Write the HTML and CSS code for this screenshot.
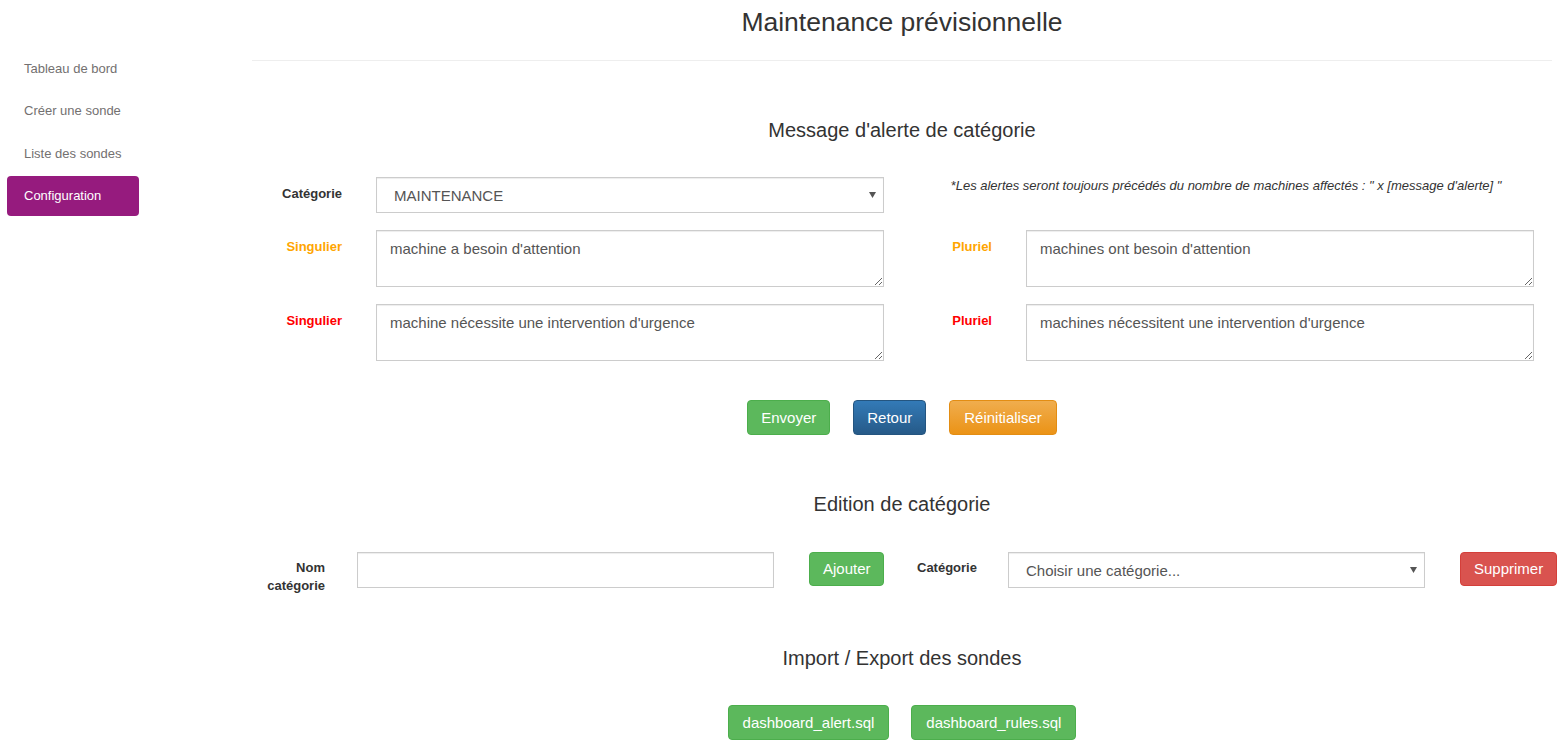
FILE: index.html
```html
<!DOCTYPE html>
<html lang="fr">
<head>
<meta charset="utf-8">
<title>Maintenance prévisionnelle</title>
<link rel="stylesheet" href="styles.css">
</head>
<body>
<div class="page">
  <aside class="sidebar">
    <nav class="nav">
      <a class="nav-item" href="#">Tableau de bord</a>
      <a class="nav-item" href="#">Créer une sonde</a>
      <a class="nav-item" href="#">Liste des sondes</a>
      <a class="nav-item active" href="#">Configuration</a>
    </nav>
  </aside>
  <main class="main">
    <h1 class="title">Maintenance prévisionnelle</h1>
    <hr class="sep">

    <h2 class="section-title first">Message d'alerte de catégorie</h2>
    <div class="alert-form">
      <label class="lbl">Catégorie</label>
      <select class="select">
        <option>MAINTENANCE</option>
      </select>
      <p class="note">*Les alertes seront toujours précédés du nombre de machines affectés : " x [message d'alerte] "</p>

      <label class="lbl orange">Singulier</label>
      <textarea class="textarea">machine a besoin d'attention</textarea>
      <label class="lbl orange">Pluriel</label>
      <textarea class="textarea">machines ont besoin d'attention</textarea>

      <label class="lbl red">Singulier</label>
      <textarea class="textarea">machine nécessite une intervention d'urgence</textarea>
      <label class="lbl red">Pluriel</label>
      <textarea class="textarea">machines nécessitent une intervention d'urgence</textarea>
    </div>
    <div class="actions">
      <button class="btn btn-success">Envoyer</button>
      <button class="btn btn-primary">Retour</button>
      <button class="btn btn-warning">Réinitialiser</button>
    </div>

    <h2 class="section-title">Edition de catégorie</h2>
    <div class="edit-row">
      <label class="lbl2 lbl-name">Nom catégorie</label>
      <input class="input" type="text">
      <button class="btn btn-sm btn-success btn-add">Ajouter</button>
      <label class="lbl2 lbl-cat">Catégorie</label>
      <select class="select select-cat">
        <option>Choisir une catégorie...</option>
      </select>
      <button class="btn btn-sm btn-danger btn-del">Supprimer</button>
    </div>

    <h2 class="section-title import">Import / Export des sondes</h2>
    <div class="actions files">
      <button class="btn btn-success">dashboard_alert.sql</button>
      <button class="btn btn-success">dashboard_rules.sql</button>
    </div>
  </main>
</div>
</body>
</html>
```

FILE: styles.css
```css
* { box-sizing: border-box; }
html, body { margin: 0; padding: 0; background: #fff; }
body {
  font-family: "Liberation Sans", Arial, sans-serif;
  color: #333;
  font-size: 14px;
}
.page {
  display: flex;
  align-items: flex-start;
  width: 1565px;
}
.sidebar {
  width: 252px;
  flex-shrink: 0;
  padding-top: 49px;
}
.nav {
  margin-left: 7px;
  width: 132px;
  display: flex;
  flex-direction: column;
  gap: 2.4px;
}
.nav-item {
  display: block;
  padding: 10px 17px;
  line-height: 20px;
  font-size: 13px;
  color: #737070;
  text-decoration: none;
  border-radius: 4px;
}
.nav-item.active {
  background: #961b7e;
  color: #fff;
}
.main {
  width: 1300px;
  flex-shrink: 0;
}
.title {
  margin: 7px 0 0;
  font-size: 26.5px;
  line-height: 30px;
  font-weight: normal;
  text-align: center;
  color: #333;
}
.sep {
  margin: 23px 0 0;
  border: 0;
  border-top: 1px solid #eee;
  height: 0;
}
.section-title {
  margin: 58px 0 0;
  font-size: 20px;
  line-height: 22px;
  font-weight: normal;
  text-align: center;
  color: #333;
}
.section-title.import { margin-top: 52px; }
.alert-form {
  margin-top: 36px;
  display: grid;
  grid-template-columns: 90px 508px 74px 508px;
  column-gap: 34px;
  row-gap: 17px;
  align-items: start;
}
.lbl {
  text-align: right;
  font-weight: bold;
  font-size: 13px;
  line-height: 20px;
  padding-top: 7px;
  color: #333;
}
.lbl.orange { color: #ffa500; }
.lbl.red { color: #ff0000; }
.note {
  grid-column: 3 / 5;
  margin: 0;
  padding-top: 0;
  text-align: center;
  font-style: italic;
  font-size: 13px;
  line-height: 18px;
  color: #333;
}
.select {
  appearance: none;
  -webkit-appearance: none;
  display: block;
  width: 100%;
  height: 36px;
  border: 1px solid #ccc;
  border-radius: 0;
  box-shadow: inset 0 1px 1px rgba(0,0,0,.075);
  background-color: #fff;
  background-image: url("data:image/svg+xml;utf8,<svg xmlns='http://www.w3.org/2000/svg' width='7' height='6'><path d='M0 0h7L3.5 6z' fill='%23555'/></svg>");
  background-repeat: no-repeat;
  background-position: right 7px center;
  padding: 0 0 0 17px;
  font-family: "Liberation Sans", Arial, sans-serif;
  font-size: 15px;
  color: #555;
}
.textarea {
  display: block;
  width: 100%;
  height: 57px;
  border: 1px solid #ccc;
  border-radius: 0;
  box-shadow: inset 0 1px 1px rgba(0,0,0,.075);
  padding: 7px 13px;
  font-family: "Liberation Sans", Arial, sans-serif;
  font-size: 15px;
  line-height: 21px;
  color: #555;
  margin: 0;
}
.actions {
  display: flex;
  justify-content: center;
  gap: 23px;
  margin-top: 39px;
}
.btn {
  font-family: "Liberation Sans", Arial, sans-serif;
  font-size: 15px;
  line-height: 21px;
  padding: 6px 13px;
  border: 1px solid transparent;
  border-radius: 4px;
  color: #fff;
  cursor: pointer;
  white-space: nowrap;
  flex-shrink: 0;
}
.btn-warning { padding: 6px 14px; }
.btn-sm {
  line-height: 20px;
  padding: 6px 13px;
}
.btn-success {
  background: #5cb85c;
  border-color: #4cae4c;
}
.btn-primary {
  background: linear-gradient(to bottom, #337ab7 0, #265a88 100%);
  border-color: #245580;
}
.btn-warning {
  background: linear-gradient(to bottom, #f0ad4e 0, #eb9316 100%);
  border-color: #e38d13;
}
.btn-danger {
  background: #d9534f;
  border-color: #d43f3a;
}
.edit-row {
  display: flex;
  align-items: flex-start;
  margin-top: 37px;
}
.lbl2 {
  flex-shrink: 0;
  font-weight: bold;
  font-size: 13px;
  line-height: 18px;
  padding-top: 7px;
  color: #333;
  text-align: right;
}
.lbl-name { width: 73px; }
.input {
  flex-shrink: 0;
  width: 417px;
  height: 36px;
  margin-left: 32px;
  border: 1px solid #ccc;
  border-radius: 0;
  box-shadow: inset 0 1px 1px rgba(0,0,0,.075);
  padding: 6px 12px;
  font-family: "Liberation Sans", Arial, sans-serif;
  font-size: 15px;
}
.btn-add { margin-left: 35px; width: 75px; }
.lbl-cat { margin-left: 33px; width: 61px; text-align: left; }
.select-cat {
  flex-shrink: 0;
  width: 417px;
  margin-left: 30px;
}
.btn-del { margin-left: 35px; width: 97px; }
.files {
  gap: 22px;
  margin-top: 36px;
}
.files .btn { padding: 6px 14px; }
```
